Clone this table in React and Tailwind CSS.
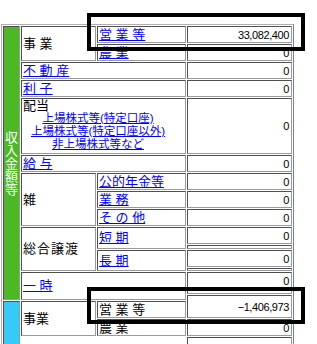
import React from "react";

const cell = "border border-t-[#505050] border-l-[#505050] border-b-[#9a9a9a] border-r-[#9a9a9a] bg-white";
const link = "text-[#0000ff] underline";
const num = "flex items-center justify-end pr-[2px] text-[11px] tracking-[-0.4px] font-['Liberation_Sans',sans-serif]";

const Val = ({ row, children = "0" }) => (
  <div className={`${cell} col-start-4 ${row} ${num}`}>{children}</div>
);

// thin empty strip between value cells in the lower part
const Strip = ({ h }) => <div className={`${cell} ${h} shrink-0`} />;

export default function App() {
  return (
    <div className="relative w-[317px] h-[344px] overflow-hidden bg-white text-black text-[13px] leading-[14px] font-['Liberation_Sans','Noto_Sans_CJK_JP',sans-serif]">
      <div className="ml-px mt-[24px] w-[293px] border border-t-[#b0b0b0] border-l-[#b0b0b0] border-b-[#808080] border-r-[#808080] p-px">
        <div className="grid grid-cols-[17px_75px_89px_105px] grid-rows-[17px_17px_17px_17px_56px_17px_17px_17px_17px_22px_21px_28px_17px_17px_17px] gap-px">
          {/* 収入金額等 */}
          <div className={`${cell} col-start-1 row-start-1 row-span-12 !bg-[#4cb825] flex items-center justify-center`}>
            <div className="w-[13px] text-[13px] leading-[13px] text-white text-center break-all">収入金額等</div>
          </div>

          <div className={`${cell} col-start-2 row-start-1 row-span-2 flex items-center pl-px`}>事 業</div>
          <div className={`${cell} col-start-3 row-start-1 flex items-center pl-px`}>
            <span className={link}>営 業 等</span>
          </div>
          <Val row="row-start-1">33,082,400</Val>
          <div className={`${cell} col-start-3 row-start-2 flex items-center pl-px`}>
            <span className={link}>農 業</span>
          </div>
          <Val row="row-start-2" />

          <div className={`${cell} col-start-2 col-span-2 row-start-3 flex items-center pl-px`}>
            <span className={link}>不 動 産</span>
          </div>
          <Val row="row-start-3" />
          <div className={`${cell} col-start-2 col-span-2 row-start-4 flex items-center pl-px`}>
            <span className={link}>利 子</span>
          </div>
          <Val row="row-start-4" />

          <div className={`${cell} col-start-2 col-span-2 row-start-5 flex flex-col pl-px leading-[13px]`}>
            <span>配当</span>
            <div className="flex flex-col items-center pr-[12px] text-[11.5px] leading-[13px]">
              <span className={link}>上場株式等(特定口座)</span>
              <span className={link}>上場株式等(特定口座以外)</span>
              <span className={link}>非上場株式等など</span>
            </div>
          </div>
          <Val row="row-start-5" />

          <div className={`${cell} col-start-2 col-span-2 row-start-6 flex items-center pl-px`}>
            <span className={link}>給 与</span>
          </div>
          <Val row="row-start-6" />

          <div className={`${cell} col-start-2 row-start-7 row-span-3 flex items-center pl-px`}>雑</div>
          <div className={`${cell} col-start-3 row-start-7 flex items-center pl-px`}>
            <span className={link}>公的年金等</span>
          </div>
          <Val row="row-start-7" />
          <div className={`${cell} col-start-3 row-start-8 flex items-center pl-px`}>
            <span className={link}>業 務</span>
          </div>
          <Val row="row-start-8" />
          <div className={`${cell} col-start-3 row-start-9 flex items-center pl-px`}>
            <span className={link}>そ の 他</span>
          </div>
          <Val row="row-start-9" />

          <div className={`${cell} col-start-2 row-start-10 row-span-2 flex items-center pl-px tracking-[1px]`}>総合譲渡</div>
          <div className={`${cell} col-start-3 row-start-10 flex items-center pl-px`}>
            <span className={link}>短 期</span>
          </div>
          <div className={`${cell} col-start-3 row-start-11 flex items-center pl-px`}>
            <span className={link}>長 期</span>
          </div>

          <div className={`${cell} col-start-2 col-span-2 row-start-12 flex items-center pl-px`}>
            <span className={link}>一 時</span>
          </div>

          {/* value column of the lower rows, stacked on its own */}
          <div className="col-start-4 row-start-10 row-span-6 flex flex-col gap-px">
            <div className={`${cell} h-[17px] shrink-0 ${num}`}>0</div>
            <Strip h="h-[4px]" />
            <div className={`${cell} h-[17px] shrink-0 ${num}`}>0</div>
            <Strip h="h-[3px]" />
            <div className={`${cell} h-[17px] shrink-0 ${num}`}>0</div>
            <Strip h="h-[4px]" />
            <div className={`${cell} h-[23px] shrink-0 ${num}`}>−1,406,973</div>
            <div className={`${cell} h-[17px] shrink-0 ${num}`}>0</div>
            <div className={`${cell} flex-1`} />
          </div>

          {/* lower block */}
          <div className={`${cell} col-start-1 row-start-13 row-span-3 !bg-[#35cbf8]`} />
          <div className={`${cell} col-start-2 row-start-13 row-span-2 flex items-center pl-px`}>事業</div>
          <div className={`${cell} col-start-3 row-start-13 flex items-center pl-px`}>営 業 等</div>
          <div className={`${cell} col-start-3 row-start-14 flex items-center pl-px`}>農 業</div>
        </div>
      </div>

      {/* highlight frames */}
      <div className="absolute left-[87px] top-[13px] w-[218px] h-[38px] border-[4px] border-black" />
      <div className="absolute left-[87px] top-[287px] w-[218px] h-[37px] border-[4px] border-black" />
    </div>
  );
}
